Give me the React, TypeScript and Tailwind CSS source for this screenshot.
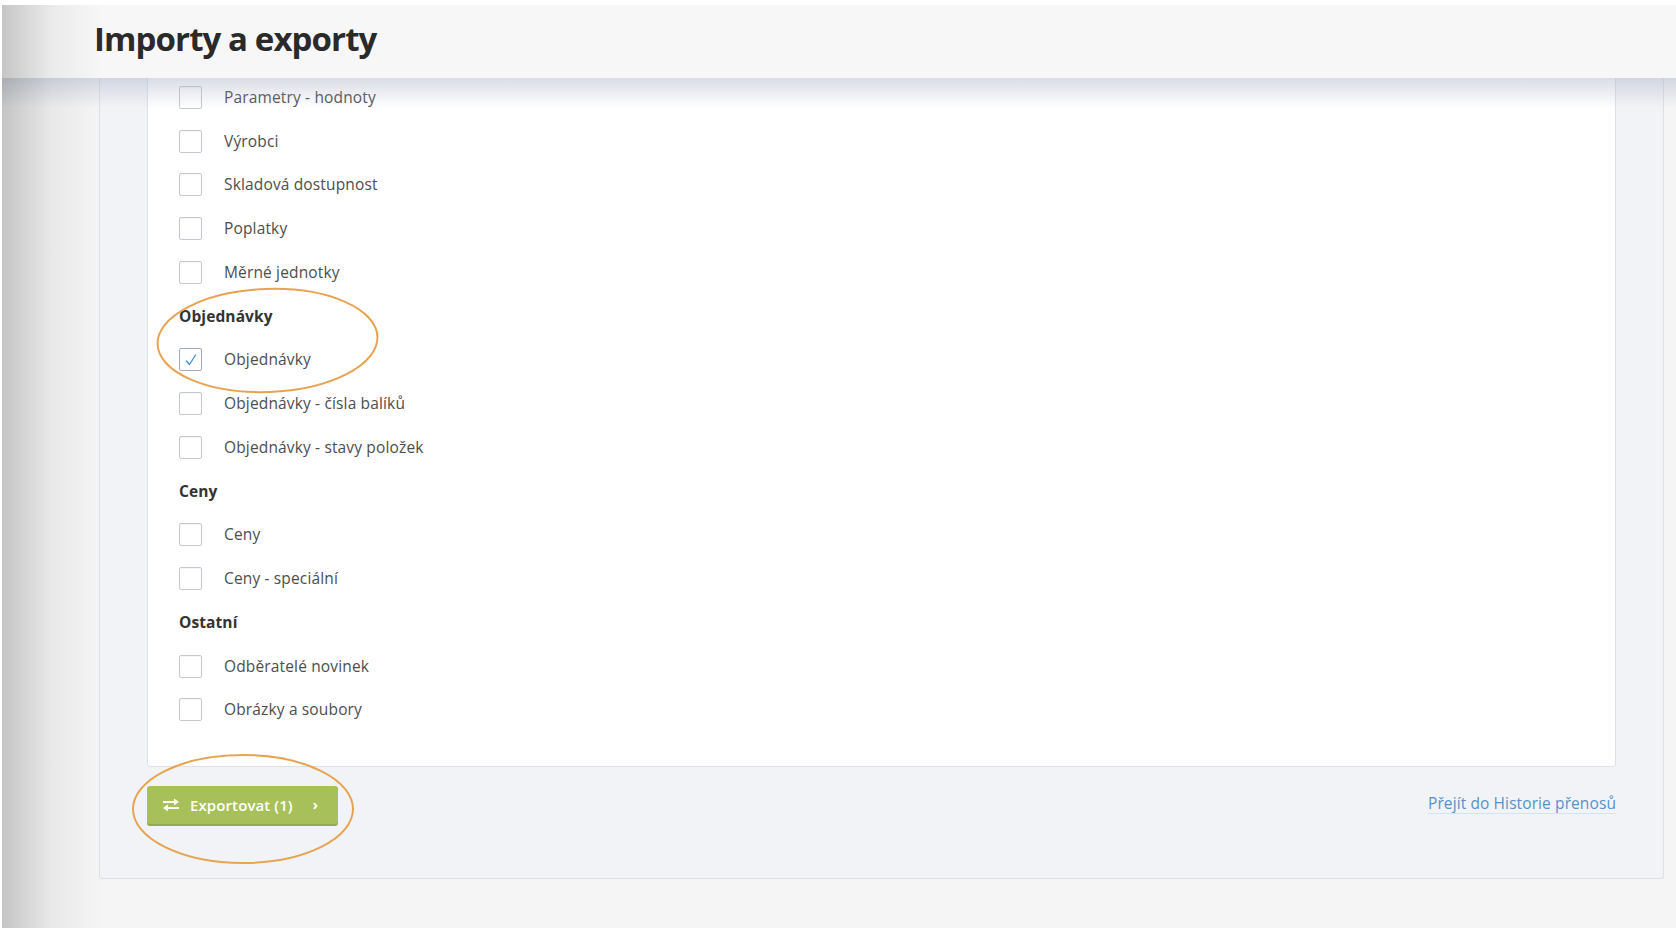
import React from "react";

type Item = { kind: "row"; label: string; checked?: boolean } | { kind: "head"; label: string };

const items: Item[] = [
  { kind: "row", label: "Parametry - hodnoty" },
  { kind: "row", label: "Výrobci" },
  { kind: "row", label: "Skladová dostupnost" },
  { kind: "row", label: "Poplatky" },
  { kind: "row", label: "Měrné jednotky" },
  { kind: "head", label: "Objednávky" },
  { kind: "row", label: "Objednávky", checked: true },
  { kind: "row", label: "Objednávky - čísla balíků" },
  { kind: "row", label: "Objednávky - stavy položek" },
  { kind: "head", label: "Ceny" },
  { kind: "row", label: "Ceny" },
  { kind: "row", label: "Ceny - speciální" },
  { kind: "head", label: "Ostatní" },
  { kind: "row", label: "Odběratelé novinek" },
  { kind: "row", label: "Obrázky a soubory" },
];

function Checkbox({ checked }: { checked?: boolean }) {
  return (
    <div
      className={
        checked
          ? "w-[23px] h-[23px] shrink-0 rounded-[2px] border border-[#a3abbb] bg-white flex items-center justify-center"
          : "w-[23px] h-[23px] shrink-0 rounded-[2px] border border-[#c4c8cf] bg-white flex items-center justify-center shadow-[inset_0_1px_1px_rgba(0,0,0,0.04)]"
      }
    >
      {checked && (
        <svg width="16" height="16" viewBox="0 0 16 16" fill="none">
          <path d="M3.5 9 L6.5 12.5 L12.5 3" stroke="#4a90d2" strokeWidth="1.4" strokeLinecap="round" strokeLinejoin="round" />
        </svg>
      )}
    </div>
  );
}

export default function App() {
  return (
    <div className="relative w-[1676px] h-[932px] overflow-hidden bg-white pt-[5px] pl-[2px] pb-[4px] font-['Open_Sans',sans-serif]">
      <div className="relative h-full flex flex-col bg-[#f5f5f5]">
        {/* header */}
        <div className="relative z-10 h-[73px] shrink-0 bg-[#f7f7f7] flex items-center pl-[92px] pb-[6px]">
          <h1 className="text-[33px] font-bold tracking-[-0.9px] text-[#2a2a2a] leading-none">Importy a exporty</h1>
          <div className="absolute left-0 right-0 top-full h-[30px] bg-gradient-to-b from-[#a9b2c6]/45 to-transparent pointer-events-none" />
        </div>

        {/* content */}
        <div className="flex-1 overflow-hidden pl-[97px] pr-[12px]">
          <div className="bg-[#f2f3f7] border-x border-b border-[#dcdfe5] rounded-b-[3px] px-[47px] pb-[54px]">
            <div className="bg-white border-x border-b border-[#dde0e6] rounded-b-[3px] pl-[31px] pb-[34px] -mt-[2.5px]">
              {items.map((it, i) =>
                it.kind === "head" ? (
                  <div key={i} className="h-[43.75px] flex items-center text-[15.5px] tracking-[0.1px] font-bold text-[#333]">
                    {it.label}
                  </div>
                ) : (
                  <div key={i} className="h-[43.75px] flex items-center gap-[22px]">
                    <Checkbox checked={it.checked} />
                    <span className="text-[15.5px] tracking-[0.15px] text-[#4d4d4d]">{it.label}</span>
                  </div>
                )
              )}
            </div>
            <div className="mt-[19px] flex items-center justify-between">
              <button className="h-[38px] w-[191px] rounded-[3px] bg-[#a8c05a] shadow-[0_2px_0_#94ab4b] flex items-center pl-[15px] text-white text-[15px] font-semibold tracking-[0.1px]">
                <svg width="18" height="14" viewBox="0 0 18 14" fill="white" className="mr-[10px]">
                  <rect x="1" y="3" width="12" height="2" />
                  <path d="M12 0.5 L17 4 L12 7.5 Z" />
                  <rect x="5" y="9" width="12" height="2" />
                  <path d="M6 6.5 L1 10 L6 13.5 Z" />
                </svg>
                <span>Exportovat (1)</span>
                <span className="ml-[20px] text-[14px] font-bold">›</span>
              </button>
              <a className="text-[15.5px] tracking-[0.1px] text-[#5592cb] underline decoration-[#d2e3f3] underline-offset-[4px] -mt-[2px]">
                Přejít do Historie přenosů
              </a>
            </div>
          </div>
        </div>

        {/* left vignette */}
        <div className="absolute left-0 top-0 bottom-0 w-[100px] bg-gradient-to-r from-black/20 via-black/5 to-transparent pointer-events-none z-20" />
      </div>

      {/* annotation ellipses */}
      <svg className="absolute left-0 top-0 pointer-events-none z-30" width="1676" height="932">
        <ellipse cx="267.5" cy="340.5" rx="110" ry="51.5" fill="none" stroke="#e6a453" strokeWidth="2" transform="rotate(-2 267.5 340.5)" />
        <ellipse cx="243" cy="809" rx="110" ry="54" fill="none" stroke="#e6a453" strokeWidth="2" />
      </svg>
    </div>
  );
}
